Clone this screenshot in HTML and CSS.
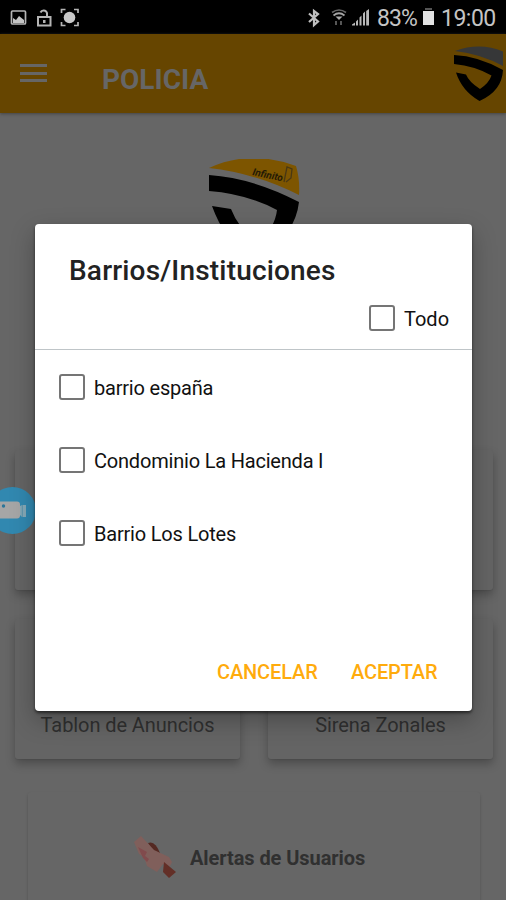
FILE: index.html
```html
<!DOCTYPE html>
<html lang="es">
<head>
<meta charset="utf-8">
<title>Policia</title>
<link rel="stylesheet" href="styles.css">
</head>
<body>
<div class="screen">
  <div class="statusbar">
    <svg class="status-left" width="72" height="20" viewBox="0 0 72 20">
      <g fill="none" stroke="#b5b5b5" stroke-width="1.7">
        <rect x="2.500" y="3" width="14" height="13" rx="1"/>
        <path d="M29 9h12.500v8.500H29zM31.500 4.500a3.500 3.500 0 0 1 6.500 0.500V9" stroke-width="2"/>
        <path d="M52.500 5V1.500h4M65 1.500h4V5M69 14v3.500h-4M56.500 17.500h-4V14" />
      </g>
      <path d="M4 15v-5l3 2 3-4 5 4v3z" fill="#c5c5c5"/>
      <rect x="34" y="12" width="2.500" height="3" fill="#b5b5b5"/>
      <circle cx="60.500" cy="9.500" r="5.800" fill="#c8c8c8"/>
    </svg>
    <div class="status-right">
      <svg width="64" height="20" viewBox="0 0 64 20">
        <path d="M4 5.500l9 8-4 3.500V3l4 3-9 8" fill="none" stroke="#c0c0c0" stroke-width="2.200"/>
        <g fill="none" stroke="#a5a5a5" stroke-width="1.700"><path d="M27 4.500q7-5 14 0" stroke="#666"/><path d="M28.500 7.500q5.500-4.500 11 0"/><path d="M31 17v-4M36 13v4" stroke="#666"/></g>
        <path d="M30.500 8.500h7L34 12z" fill="#aaa"/>
        <path d="M47 17.500v-1l3-2v3zM51 17.500v-4l2-2v6zM54.500 17.500v-8l2-2v10zM58 17.500v-12l2-2v14zM61.200 17.500V3l2.800-2v16.500z" fill="#b8b8b8"/>
      </svg>
      <span class="battery-text">83%</span>
      <svg class="battery" width="13" height="18" viewBox="0 0 13 18"><path d="M1 3h11v14H1z" fill="#e2e2e2"/><path d="M3 0h7v2H3z" fill="#555"/></svg>
      <span class="clock">19:00</span>
    </div>
  </div>
  <header class="appbar">
    <div class="burger"><i></i><i></i><i></i></div>
    <h1>POLICIA</h1>
    <svg class="shield" width="53" height="58" viewBox="0 0 53 58">
      <path d="M2 5Q27-4 50 5.500V20Q28 8 2 5z" fill="#363738"/>
      <path d="M1 9Q25 10 50 24Q49 45 26.500 55Q9 45 3 26.500L13 28.500Q16 36 27 43Q36 37 38.500 29.500Q22 20 1 18z" fill="#000"/>
    </svg>
  </header>
  <main>
    <div class="logo">
      <svg width="92" height="101" viewBox="0 0 92 101">
        <path d="M1 9Q42-10 88 7Q92 20 91 36Q47 14 1 9z" fill="#7d5500"/>
        <path d="M1 16Q45 19 91 43Q87 78 48 101Q18 86 4 47L23 50Q31 71 50 83Q67 69 69 51Q39 35 1 32z" fill="#000"/>
        <text x="44" y="16" transform="rotate(12 44 16)">Infinito</text>
        <path d="M76 23l3-15 5 2-1 9-5 4" fill="none" stroke="#493813" stroke-width="1.300"/>
      </svg>
    </div>
    <div class="grid">
      <div class="card"></div>
      <div class="card"></div>
      <div class="card"><span class="l1">Tablon de Anuncios</span></div>
      <div class="card"><span class="l2">Sirena Zonales</span></div>
    </div>
    <div class="alerts">
      <svg width="44" height="44" viewBox="0 0 44 44">
        <path d="M14 8q7-3 12 10l-5 2z" fill="#542922"/>
        <path d="M0 7l7-6 13 14 15 7 3 5-2 4-7-2-6 8-10-6-3-9-5-3z" fill="#805f5b"/>
        <path d="M4 12l9 5-2 4 4 3-2 3-4-4z" fill="#814b4d"/>
        <path d="M30 27l12 10-7 6-6-6z" fill="#632f27"/>
      </svg>
      <span>Alertas de Usuarios</span>
    </div>
  </main>
  <div class="bubble">
    <svg width="35" height="48" viewBox="0 0 35 48"><rect x="-5" y="14.500" width="25" height="17" rx="3" fill="#a6a6a6"/><path d="M20 19l2-1h4v12h-4l-2-2z" fill="#86a9b7"/><path d="M22.300 18v12" stroke="#5b93aa"/><circle cx="3.500" cy="19" r="1.700" fill="#2b7599"/></svg>
  </div>
  <section class="dialog">
    <div class="dialog-head">
      <h2>Barrios/Instituciones</h2>
      <div class="check all"><i class="box"></i><span class="t0">Todo</span></div>
    </div>
    <div class="list">
      <div class="check"><i class="box"></i><span class="t1">barrio españa</span></div>
      <div class="check"><i class="box"></i><span class="t2">Condominio La Hacienda I</span></div>
      <div class="check"><i class="box"></i><span class="t3">Barrio Los Lotes</span></div>
    </div>
    <div class="actions"><span class="b1">CANCELAR</span><span class="b2">ACEPTAR</span></div>
  </section>
</div>
</body>
</html>
```
FILE: styles.css
```css
* { box-sizing: border-box; }
body { margin: 0; font-family: Roboto, sans-serif; }
.screen { position: relative; width: 506px; height: 900px; overflow: hidden; background: #666; }
.statusbar { height: 34px; background: #000; display: flex; justify-content: space-between; padding: 8px 11px 0 9px; color: #c4c4c4; }
.status-left { display: block; }
.status-right { display: flex; align-items: flex-start; }
.status-right span { font-size: 23px; line-height: 20px; white-space: nowrap; padding-top: 1px; }
.battery-text { margin-left: 8px; width: 40px; letter-spacing: -0.9px; }
.battery { margin: 0 6px 0 5px; }
.clock { width: 54px; letter-spacing: -0.5px; }
.appbar { height: 79px; background: #664500; display: flex; align-items: flex-start; padding-left: 20px; box-shadow: 0 1px 3px #444; }
.burger { width: 27px; margin-top: 30px; display: flex; flex-direction: column; gap: 4.500px; }
.burger i { height: 3px; background: #666; }
.appbar h1 { margin: 29px 0 0 55px; font-size: 28px; line-height: 34px; font-weight: 700; color: #666; white-space: nowrap; }
.shield { margin: 12px 0 0 auto; }
.logo { height: 337px; padding: 46px 0 0 208px; }
.logo svg { display: block; }
.logo text { font: italic 700 10px Roboto, sans-serif; fill: #241a06; }
.grid { display: grid; grid-template-columns: 225px 225px; grid-auto-rows: 140px; gap: 29px 28px; padding-left: 15px; }
.card { border-radius: 3px; background: #646464; box-shadow: 0 5px 10px rgba(0,0,0,.26), 0 1px 1px rgba(0,0,0,.06); display: flex; flex-direction: column; justify-content: flex-end; align-items: center; padding-bottom: 22px; }
.card span { font-size: 20px; line-height: 24px; letter-spacing: -0.08px; color: #303030; white-space: nowrap; }
.alerts { margin: 33px 26px 0 28px; height: 130px; border-radius: 3px; box-shadow: 0 2px 3px rgba(0,0,0,.2); background: #666; display: flex; padding: 43px 0 0 106px; }
.alerts span { margin: 11px 0 0 12px; font-size: 20px; line-height: 24px; letter-spacing: -0.08px; font-weight: 700; color: #303030; white-space: nowrap; }
.bubble { position: absolute; left: -11px; top: 487px; width: 47px; height: 47px; border-radius: 50%; background: #3188b0; padding-left: 11px; }
.dialog { position: absolute; left: 35px; top: 224px; width: 437px; height: 487px; background: #fff; border-radius: 4px; box-shadow: 0 2px 3px rgba(0,0,0,.55), 0 9px 24px rgba(0,0,0,.28); display: flex; flex-direction: column; }
.dialog-head { height: 126px; border-bottom: 1.500px solid #bfc5c8; padding-top: 30px; }
.dialog h2 { margin: 0 0 0 34px; font-size: 28px; line-height: 34px; letter-spacing: 0.18px; font-weight: 500; color: #222; white-space: nowrap; }
.check { display: flex; align-items: center; height: 26px; color: #111; font-size: 20px; }
.check span { margin-left: 9px; line-height: 26px; white-space: nowrap; padding-top: 1px; }
.t1, .t2, .t3 { letter-spacing: -0.2px; }
.box { width: 26px; height: 26px; border: 2.500px solid #757575; border-radius: 3px; flex: none; }
.all { margin: 17px 0 0 334px; }
.list { display: flex; flex-direction: column; gap: 47px; padding: 24px 0 0 24px; flex: 1; }
.actions { display: flex; padding: 0 0 27px 182px; height: 51px; font-size: 20px; line-height: 24px; letter-spacing: -0.13px; font-weight: 500; color: #ffab0c; white-space: nowrap; }
.actions .b1 { width: 134px; }
```
